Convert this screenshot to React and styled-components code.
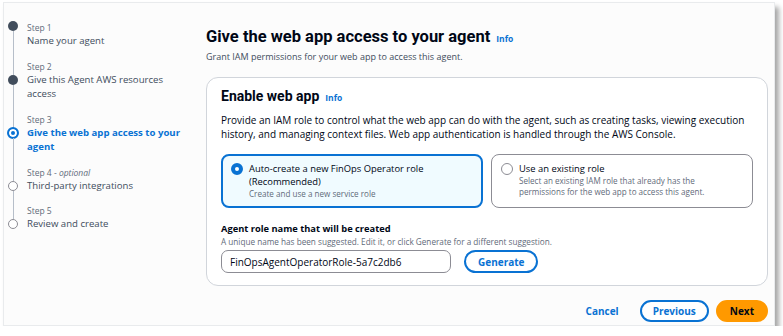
import React from 'react';
import styled, { createGlobalStyle } from 'styled-components';

const GlobalStyle = createGlobalStyle`
  html, body {
    margin: 0;
    padding: 0;
    background: #ffffff;
  }
  body {
    font-family: "Open Sans", "Liberation Sans", sans-serif;
    color: #000716;
  }
`;

const BLUE = '#0972d3';
const HEAD_FONT = 'Roboto, "Open Sans", sans-serif';

// FRAME
const Frame = styled.div`
  box-sizing: border-box;
  margin: 2px 0 0 3px;
  width: 772px;
  height: 324px;
  border: 1px solid #e9ebed;
  background: #fcfcfc;
  box-shadow: 4px 5px 5px rgba(0, 0, 0, 0.35);
  display: flex;
`;

// SIDEBAR / STEPS
const Sidebar = styled.nav`
  width: 202px;
  flex-shrink: 0;
  box-sizing: border-box;
  padding: 18px 0 0 3px;
`;

const Step = styled.div`
  display: flex;
`;

const Rail = styled.div`
  width: 12px;
  display: flex;
  flex-direction: column;
  align-items: center;
`;

const Line = styled.div`
  width: 1px;
  background: ${p => (p.hidden ? 'transparent' : '#b6bec9')};
  height: ${p => (p.grow ? 'auto' : `${p.h}px`)};
  flex: ${p => (p.grow ? 1 : 'none')};
`;

const Dot = styled.div`
  box-sizing: border-box;
  flex-shrink: 0;
  border-radius: 50%;
  width: ${p => (p.state === 'active' ? 12 : 10)}px;
  height: ${p => (p.state === 'active' ? 12 : 10)}px;
  margin: ${p => (p.state === 'active' ? '-1px 0' : '0')};
  background: ${p =>
    p.state === 'done' ? '#414d5c' : p.state === 'active' ? BLUE : '#ffffff'};
  border: ${p =>
    p.state === 'active'
      ? `2px solid ${BLUE}`
      : p.state === 'todo'
      ? '1.5px solid #8c8c94'
      : 'none'};
  box-shadow: ${p => (p.state === 'active' ? 'inset 0 0 0 2px #ffffff' : 'none')};
`;

const StepText = styled.div`
  padding: 0 0 11px 8px;
`;

const StepLabel = styled.div`
  font-size: 8.5px;
  line-height: 13px;
  color: #5f6b7a;

  i {
    font-style: italic;
  }
`;

const StepTitle = styled.div`
  font-size: 9.6px;
  line-height: 14.5px;
  color: ${p => (p.active ? BLUE : '#414d5c')};
  font-weight: ${p => (p.active ? 700 : 400)};
`;

// MAIN
const Main = styled.main`
  flex: 1;
  display: flex;
  flex-direction: column;
  padding: 23px 6px 0 0;
`;

const TitleRow = styled.div`
  display: flex;
  align-items: baseline;
  gap: 6px;
`;

const H1 = styled.h1`
  margin: 0;
  font-family: ${HEAD_FONT};
  font-size: 16.5px;
  line-height: 22px;
  font-weight: 700;
  color: #000716;
`;

const Info = styled.a`
  font-size: 8.5px;
  font-weight: 700;
  color: ${BLUE};
  text-decoration: none;
`;

const Subtitle = styled.p`
  margin: 2px 0 0;
  font-size: 9px;
  line-height: 14px;
  color: #414d5c;
`;

const Card = styled.section`
  margin-top: 13px;
  border: 1px solid #d1d5db;
  border-radius: 12px;
  background: #ffffff;
  padding: 8px 14px 12px;
`;

const H2 = styled.h2`
  margin: 0;
  font-family: ${HEAD_FONT};
  font-size: 14px;
  line-height: 20px;
  font-weight: 700;
  color: #000716;
`;

const Para = styled.p`
  margin: 7px 0 0;
  font-size: 10px;
  line-height: 14px;
  color: #000716;
`;

const Tiles = styled.div`
  margin-top: 13px;
  display: grid;
  grid-template-columns: 1fr 1fr;
  gap: 8px;
`;

const Tile = styled.label`
  box-sizing: border-box;
  height: 54px;
  display: flex;
  gap: 6px;
  padding: ${p => (p.selected ? '6px 8px' : '7px 9px')};
  border-radius: 8px;
  border: ${p => (p.selected ? `2px solid ${BLUE}` : '1px solid #8c8c94')};
  background: ${p => (p.selected ? '#f0fbff' : '#ffffff')};
`;

const Radio = styled.span`
  box-sizing: border-box;
  flex-shrink: 0;
  margin-top: 1px;
  width: 12px;
  height: 12px;
  border-radius: 50%;
  background: #ffffff;
  border: ${p => (p.checked ? `4px solid ${BLUE}` : '1.5px solid #8c8c94')};
`;

const TileTitle = styled.div`
  font-size: 9.4px;
  line-height: 13px;
  color: #000716;
`;

const TileDesc = styled.div`
  font-size: 8.1px;
  line-height: 11px;
  color: #5f6b7a;
`;

const FieldLabel = styled.div`
  margin-top: 14px;
  font-size: 9.3px;
  line-height: 14px;
  font-weight: 700;
  color: #000716;
`;

const Hint = styled.div`
  font-size: 8.2px;
  line-height: 12px;
  color: #5f6b7a;
`;

const InputRow = styled.div`
  margin-top: 2px;
  display: flex;
  gap: 13px;
`;

const TextInput = styled.input`
  box-sizing: border-box;
  width: 230px;
  height: 23px;
  padding: 0 8px;
  border: 1px solid #8c8c94;
  border-radius: 7px;
  font: inherit;
  font-size: 10px;
  color: #000716;
  background: #ffffff;
  outline: none;
`;

const PillButton = styled.button`
  box-sizing: border-box;
  height: ${p => p.h || 23}px;
  padding: 0 ${p => p.px || 14}px;
  border-radius: 20px;
  font: inherit;
  font-size: 10px;
  font-weight: 700;
  cursor: pointer;
  color: ${p => (p.variant === 'primary' ? '#000716' : BLUE)};
  background: ${p =>
    p.variant === 'primary' ? '#ff9900' : p.variant === 'link' ? 'transparent' : '#ffffff'};
  border: ${p =>
    p.variant === 'primary'
      ? '2px solid #ff9900'
      : p.variant === 'link'
      ? '2px solid transparent'
      : `2px solid ${BLUE}`};
`;

const Footer = styled.div`
  margin-top: 14px;
  display: flex;
  justify-content: flex-end;
  gap: 7px;
`;

const steps = [
  { label: 'Step 1', lines: ['Name your agent'], state: 'done' },
  { label: 'Step 2', lines: ['Give this Agent AWS resources', 'access'], state: 'done' },
  { label: 'Step 3', lines: ['Give the web app access to your', 'agent'], state: 'active' },
  { label: 'Step 4', optional: true, lines: ['Third-party integrations'], state: 'todo' },
  { label: 'Step 5', lines: ['Review and create'], state: 'todo' },
];

export default function App() {
  return (
    <>
      <GlobalStyle />
      <Frame>
        <Sidebar>
          {steps.map((s, i) => (
            <Step key={s.label}>
              <Rail>
                <Line h={15} hidden={i === 0} />
                <Dot state={s.state} />
                <Line grow hidden={i === steps.length - 1} />
              </Rail>
              <StepText>
                <StepLabel>
                  {s.label}
                  {s.optional && <> - <i>optional</i></>}
                </StepLabel>
                <StepTitle active={s.state === 'active'}>
                  {s.lines.map((l, j) => (
                    <div key={j}>{l}</div>
                  ))}
                </StepTitle>
              </StepText>
            </Step>
          ))}
        </Sidebar>

        <Main>
          <TitleRow>
            <H1>Give the web app access to your agent</H1>
            <Info href="#">Info</Info>
          </TitleRow>
          <Subtitle>Grant IAM permissions for your web app to access this agent.</Subtitle>

          <Card>
            <TitleRow>
              <H2>Enable web app</H2>
              <Info href="#">Info</Info>
            </TitleRow>
            <Para>
              Provide an IAM role to control what the web app can do with the agent, such as
              creating tasks, viewing execution history, and managing context files. Web app
              authentication is handled through the AWS Console.
            </Para>

            <Tiles>
              <Tile selected>
                <Radio checked />
                <div>
                  <TileTitle>Auto-create a new FinOps Operator role<br />(Recommended)</TileTitle>
                  <TileDesc>Create and use a new service role</TileDesc>
                </div>
              </Tile>
              <Tile>
                <Radio />
                <div>
                  <TileTitle>Use an existing role</TileTitle>
                  <TileDesc>
                    Select an existing IAM role that already has the
                    <br />
                    permissions for the web app to access this agent.
                  </TileDesc>
                </div>
              </Tile>
            </Tiles>

            <FieldLabel>Agent role name that will be created</FieldLabel>
            <Hint>A unique name has been suggested. Edit it, or click Generate for a different suggestion.</Hint>
            <InputRow>
              <TextInput defaultValue="FinOpsAgentOperatorRole-5a7c2db6" />
              <PillButton px={12}>Generate</PillButton>
            </InputRow>
          </Card>

          <Footer>
            <PillButton variant="link" px={12} h={22}>Cancel</PillButton>
            <PillButton px={11} h={22}>Previous</PillButton>
            <PillButton variant="primary" px={12} h={22}>Next</PillButton>
          </Footer>
        </Main>
      </Frame>
    </>
  );
}
